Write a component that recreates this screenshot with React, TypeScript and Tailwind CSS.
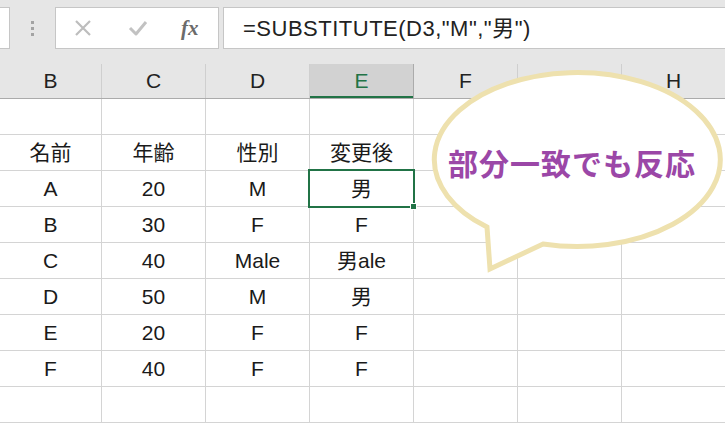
import React from 'react';

const cols = ['B', 'C', 'D', 'E', 'F', 'G', 'H'];

const rows: string[][] = [
  ['', '', '', ''],
  ['名前', '年齢', '性別', '変更後'],
  ['A', '20', 'M', '男'],
  ['B', '30', 'F', 'F'],
  ['C', '40', 'Male', '男ale'],
  ['D', '50', 'M', '男'],
  ['E', '20', 'F', 'F'],
  ['F', '40', 'F', 'F'],
  ['', '', '', ''],
];

const cellFont = { fontFamily: '"Liberation Sans", "Noto Sans CJK JP", sans-serif' };

export default function App() {
  return (
    <div className="relative w-[725px] h-[423px] overflow-hidden bg-white text-[#1a1a1a]" style={cellFont}>
      {/* formula bar */}
      <div className="h-[64px] bg-[#e6e6e6] flex items-start pt-[7px]">
        <div className="w-[10px] h-[42px] bg-white border border-l-0 border-[#c6c6c6]" />
        <div className="w-[45px] h-[42px] flex flex-col items-center justify-center gap-[3px]">
          <span className="w-[3px] h-[3px] bg-[#a3a3a3]" />
          <span className="w-[3px] h-[3px] bg-[#a3a3a3]" />
          <span className="w-[3px] h-[3px] bg-[#a3a3a3]" />
        </div>
        <div className="w-[164px] h-[42px] bg-white border border-[#c6c6c6] flex items-center">
          <svg width="18" height="18" viewBox="0 0 18 18" className="ml-[18px]">
            <path d="M2 2 L16 16 M16 2 L2 16" stroke="#bdbdbd" strokeWidth="2.2" fill="none" />
          </svg>
          <svg width="20" height="16" viewBox="0 0 20 16" className="ml-[36px]">
            <path d="M2 8 L8 14 L18 2" stroke="#c2c2c2" strokeWidth="3" fill="none" strokeLinejoin="round" />
          </svg>
          <span
            className="ml-[33px] text-[21px] italic font-bold text-[#6b6b6b] leading-none"
            style={{ fontFamily: '"Liberation Serif", serif' }}
          >
            fx
          </span>
        </div>
        <div className="ml-[4px] flex-1 h-[42px] bg-white border border-r-0 border-[#c6c6c6] flex items-center pl-[19px] text-[22px] tracking-[0.5px] text-[#222]">
          =SUBSTITUTE(D3,"M","男")
        </div>
      </div>

      {/* column headers */}
      <div className="flex h-[35px] bg-[#e6e6e6] border-b border-[#ababab]">
        {cols.map((c, i) => (
          <div
            key={c}
            className={`${i === 0 ? 'w-[102px]' : 'w-[104px]'} shrink-0 flex items-center justify-center text-[21px] border-r ${
              c === 'E'
                ? 'bg-[#d2d2d2] text-[#217346] border-[#ababab] shadow-[inset_0_-2px_0_#217346]'
                : 'text-[#222] border-[#cfcfcf]'
            }`}
          >
            {c === 'G' ? '' : c}
          </div>
        ))}
      </div>

      {/* grid */}
      <div className="flex flex-col">
        {rows.map((r, ri) => (
          <div key={ri} className="flex h-[36px] border-b border-[#d4d4d4]">
            {cols.map((c, ci) => (
              <div
                key={c}
                className={`${ci === 0 ? 'w-[102px]' : 'w-[104px]'} shrink-0 flex items-center justify-center text-[21px] border-r border-[#d4d4d4] ${
                  ri === 2 && ci === 3 ? 'relative' : ''
                }`}
              >
                {r[ci] ?? ''}
                {ri === 2 && ci === 3 && (
                  <>
                    <div className="absolute left-[-2px] top-[-2px] right-[-2px] bottom-[-2px] border-2 border-[#217346]" />
                    <div className="absolute right-[-4px] bottom-[-4px] w-[7px] h-[7px] bg-[#217346] border border-white" />
                  </>
                )}
              </div>
            ))}
          </div>
        ))}
      </div>

      {/* speech balloon */}
      <svg className="absolute left-0 top-0 pointer-events-none" width="725" height="423">
        <path
          d="M487 227 A143 87 0 1 1 543 244 L490 269 Z"
          fill="#ffffff"
          stroke="#eee1ae"
          strokeWidth="5"
          strokeLinejoin="miter"
        />
      </svg>
      <div
        className="absolute left-[427px] top-[140px] w-[290px] text-center text-[30px] font-bold text-[#9b47a7] leading-[44px] tracking-[1px]"
        style={{ fontFamily: '"Noto Sans CJK JP", sans-serif' }}
      >
        部分一致でも反応
      </div>
    </div>
  );
}
